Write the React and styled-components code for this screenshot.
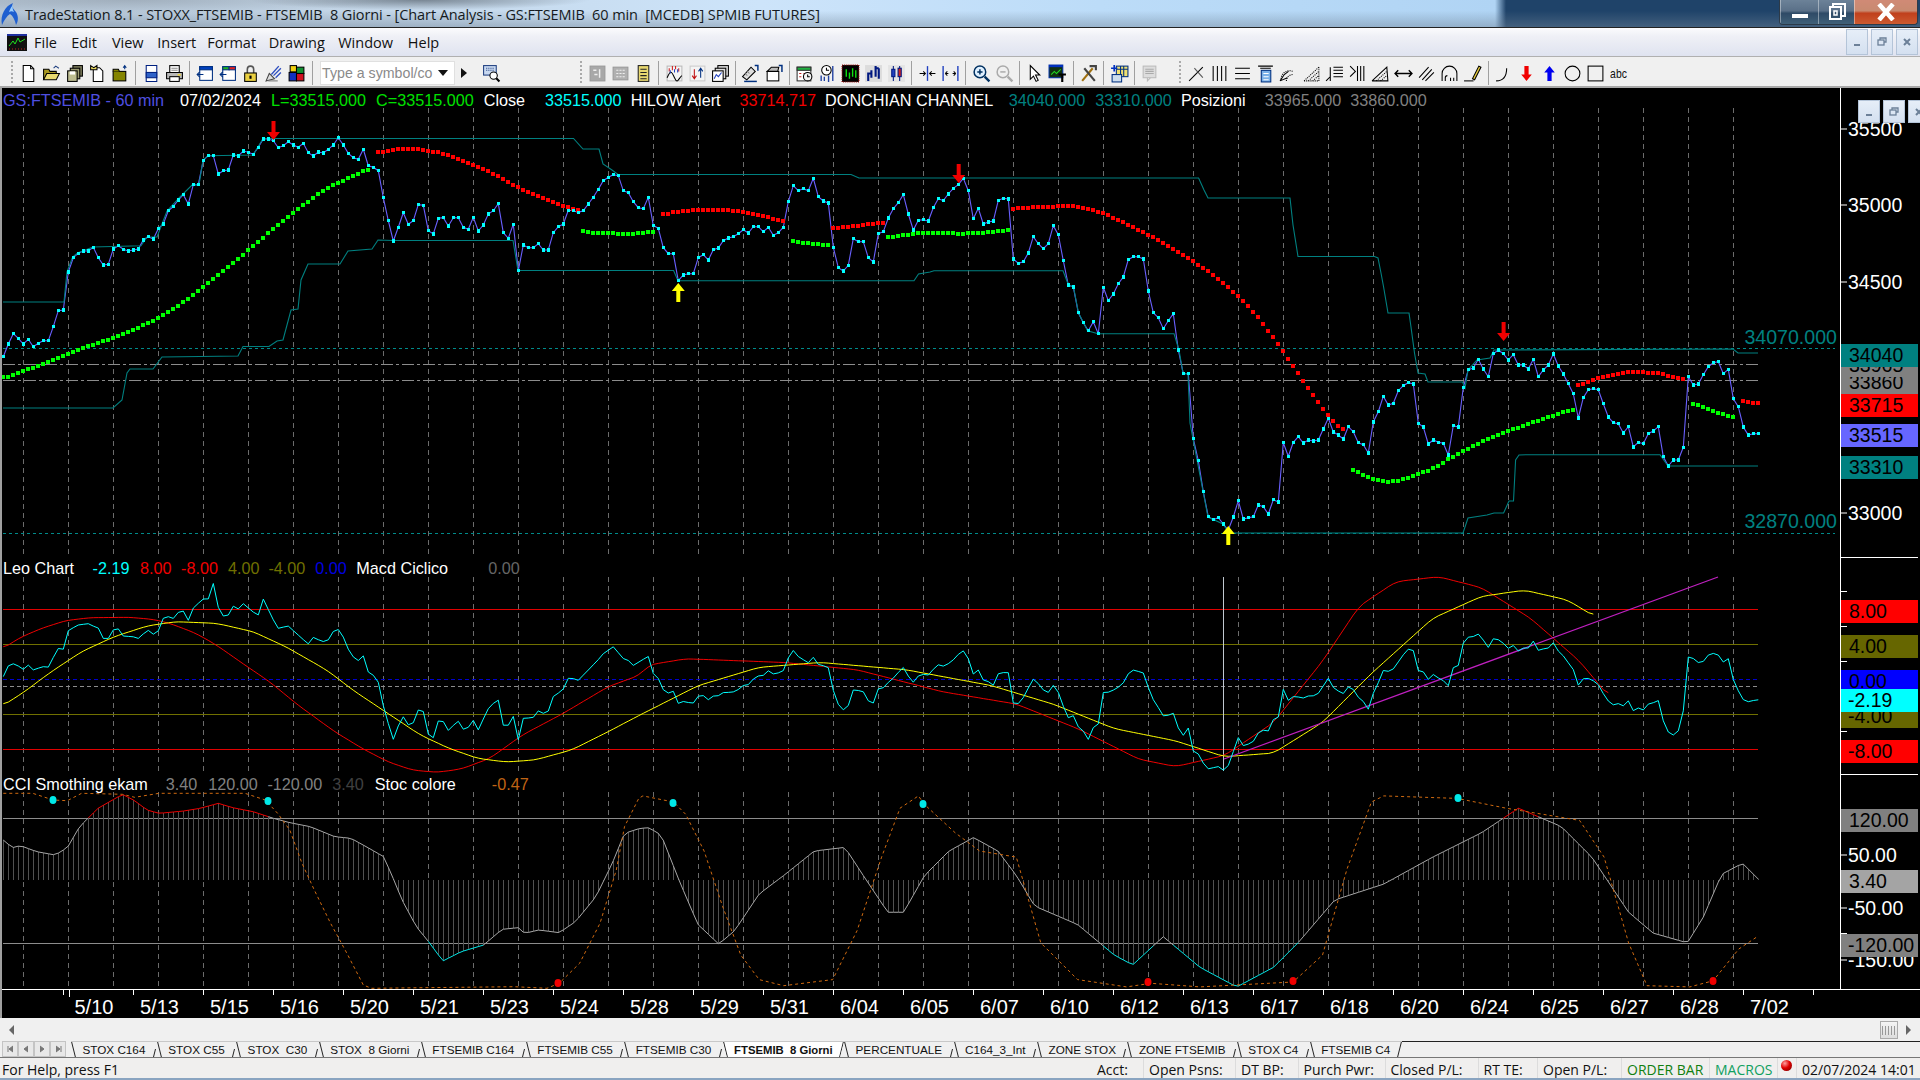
import React from "react";
import styled, { createGlobalStyle } from "styled-components";

const GlobalStyle = createGlobalStyle`
  html, body { margin: 0; padding: 0; background: #000; overflow: hidden; }
  * { box-sizing: border-box; }
`;

const UI_FONT = `"Open Sans", "Noto Sans", sans-serif`;
const CHART_FONT = `"Liberation Sans", Arial, sans-serif`;

/* ---------- data helpers: everything is in page pixels ---------- */
const barX = (i) => 3.3 + 5 * i;
const z9 = (p) => [p[0] / 2.45, p[1] / 3 + 90];
const z10 = (p) => [p[0] / 2.45, p[1] / 3 + 550];
const z11 = (p) => [620 + p[0] / 2.613, p[1] / 3 + 90];
const z12 = (p) => [1200 + p[0] / 2.75, p[1] / 3 + 240];
const dsp = (p) => [p[0] * 1.2245, p[1] * 1.2245];

const lerp = (pts, x) => {
  if (x <= pts[0][0]) return pts[0][1];
  for (let k = 1; k < pts.length; k++) {
    if (x <= pts[k][0]) {
      const [x0, y0] = pts[k - 1];
      const [x1, y1] = pts[k];
      return y0 + ((y1 - y0) * (x - x0)) / (x1 - x0);
    }
  }
  return pts[pts.length - 1][1];
};

const onBars = (pts, win = 0) => {
  const a = Math.ceil((pts[0][0] - 3.3) / 5);
  const b = Math.floor((pts[pts.length - 1][0] - 3.3) / 5);
  const raw = [];
  for (let i = a; i <= b; i++) raw.push([barX(i), lerp(pts, barX(i))]);
  if (!win) return raw;
  return raw.map(([x], n) => {
    const s = raw.slice(Math.max(0, n - win), n + win + 1);
    return [x, s.reduce((t, q) => t + q[1], 0) / s.length];
  });
};

const toLine = (pts) => pts.map((p) => `${p[0].toFixed(1)},${p[1].toFixed(1)}`).join(" ");

const priceA = [800,762,731,745,762,748,770,760,752,752,710,662,660,546,503,490,483,483,472,503,525,523,477,467,478,483,480,477,450,440,447,416,402,362,350,330,314,342,284,284,211,197,197,252,242,240,195,198,183,187,193,172,147,147,152,173,167,155,165,172,160,188,198,186,189,178,165,143,165,190,203,208,178,227,232,242,323,392,453,412,368,403,392,344,346,422,432,385,383,408,383,383,412,418,382,423,405,372,362,341,428,445,403,542,465,473,473,461,480,480,428,410,402,361,362,367,362,342,322,298,272,262,254,257];
const priceB = [302,308,335,353,356,322,406,415,473,491,491,572,555,551,551,503,494,510,479,474,452,444,440,431,419,429,410,410,425,412,436,428,412,335,287,302,296,302,265,320,333,339,472,533,543,526,446,455,455,503,516,431,425,384,356,338,314,372,420,391,389,393,353,326,332,312,295,284,265,302,386,355,402,396,393,331,325,327,507,520,515,489,440,461,476,461,407,434,512,585,591,668,698,722,695,731,592,632,612,581,561,509,500,500,507,603,668,683,716,692,671,780,851,851,1046,1112];
const priceC = [755,830,839,833,852,870,831,782,837,833,830,795,800,822,779,786,608,649,607,590,609,600,603,600,567,535,576,585,597,560,575,608,614,639,546,515,469,495,490,452,437,428,432,550,561,612,600,607,610,645,557,561,442,389,384,358,387,410,341,330,341,360,344,375,375,387,358,410,390,375,342,378,402,431,461,534,473,449,446,449,491,531,548,551,579,560,621,607,611,581,573,560,650,678,660,660,622,410,435,432,404,380,368,365,401,388,476,500,561,585,581,581];
const price = [...priceA.map((y) => y / 3 + 90), ...priceB.map((y) => y / 3 + 90), ...priceC.map((y) => y / 3 + 240)].map((y, i) => [barX(i), y]);

const upperChannel = [[3,302],[64,302],[67,272],[72.6,257],[77.5,253],[93,247],[141,245.7],[147,237],[157,237],[167,211],[180,197],[192,185],[199,185],[203,160],[208,155.7],[253,155],[258,147],[263,138.5],[573.5,138.5],[583,149],[599,149],[603,164],[612,170],[618,174.5],[851,174.5],[859,178],[1198.6,178],[1204,190],[1208,198],[1290,198],[1293,225],[1298,256.5],[1374.5,256.5],[1378,258],[1381,273],[1383.6,287],[1388,313],[1409,313],[1411,327],[1414.5,353],[1418,373],[1425,374],[1428,382],[1462.5,382],[1465,388],[1468,370],[1477,360],[1490,358],[1494,350],[1733,349],[1738,353],[1758,353]];
const lowerChannel = [[3,408],[113,408],[122,400],[127,373],[130,369],[153,369],[162,357],[238,356],[243,346.5],[269,346.5],[277,341],[283,340],[291,310],[298,309],[301,280],[308,264],[340,264],[348,251],[372,249],[378,240],[393,240.5],[513,240.5],[518,270.5],[673.6,270.5],[678,280.7],[914,280.7],[918.5,274],[930,272],[934,270.7],[1063,270.7],[1068.5,285],[1073.5,287],[1078.5,313],[1087.6,330.7],[1098,333.7],[1174,333.7],[1179,350],[1183,373],[1188,374],[1190,423],[1193,439],[1203,491],[1208,517],[1223,524],[1229,533],[1463,533],[1468,518],[1487,515],[1494,513],[1503.6,513],[1509,501],[1513.5,501],[1515.6,460],[1519,455],[1526,454.7],[1660,454.7],[1668,466],[1758,466]];

const hilowSegs = [
  { c: "#00ff00", p: [[8,865],[100,825],[200,775],[300,735],[380,690],[430,655],[500,590],[600,490],[700,385],[800,295],[880,250],[905,235]].map(z9) },
  { c: "#ff0000", p: [[925,188],[975,177],[1020,177],[1080,188],[1150,220],[1200,245],[1270,292],[1340,330],[1417,363]].map(z9) },
  { c: "#00ff00", p: [[[1427,422],[1460,430],[1568,431]].map(z9), [[8,431],[50,428],[100,424]].map(z11)].flat() },
  { c: "#ff0000", p: [[113,375],[150,364],[210,359],[280,359],[330,367],[380,380],[430,395]].map(z11) },
  { c: "#00ff00", p: [[440,450],[490,460],[545,465]].map(z11) },
  { c: "#ff0000", p: [[557,415],[620,407],[692,396]].map(z11) },
  { c: "#00ff00", p: [[700,444],[750,434],[790,429],[900,431],[960,428],[1017,420]].map(z11) },
  { c: "#ff0000", p: [[[1027,356],[1100,351],[1185,348],[1225,356],[1265,370],[1330,405],[1380,433],[1430,465],[1500,515],[1568,568]].map(z11), [[50,117],[105,167],[160,230],[200,290],[229,333],[270,400],[310,465],[353,525],[395,578]].map(z12)].flat() },
  { c: "#00ff00", p: [[408,675],[450,708],[490,722],[530,726],[570,715],[640,687],[700,647],[800,593],[900,553],[1027,507]].map(z12) },
  { c: "#ff0000", p: [[1040,437],[1095,415],[1150,400],[1205,395],[1270,401],[1330,420]].map(z12) },
  { c: "#00ff00", p: [[1343,480],[1400,510],[1480,537]].map(z12) },
  { c: "#ff0000", p: [[1494,483],[1536,491]].map(z12) },
];

const leoHead = [[8,380],[20,348],[35,340],[57,358],[69,345],[81,360],[105,350],[118,352],[142,295],[154,303],[166,243],[191,225],[216,221],[228,228],[240,232],[252,265],[264,268],[277,240],[289,235],[301,258],[326,260],[338,266],[362,240],[375,253],[387,245],[400,205],[412,200],[424,206],[437,187],[449,183],[461,212],[473,175],[497,147],[510,148],[522,97],[534,170],[546,198],[558,198],[571,168],[583,178],[595,160],[632,198],[645,147],[669,208],[681,235],[706,228],[755,282],[767,262],[791,275],[804,270],[816,245],[828,237],[840,258],[852,295],[865,320],[877,333],[889,313],[901,365],[914,375],[926,392],[938,462],[950,515],[963,570],[975,530],[987,498],[999,525],[1012,520],[1024,480],[1036,478],[1048,550],[1060,570],[1073,513],[1085,512],[1097,543],[1122,512],[1134,538],[1146,535],[1158,507],[1171,542],[1195,478],[1220,445],[1232,525],[1244,530],[1256,490],[1270,570],[1281,505],[1306,503],[1318,482],[1330,490],[1342,488],[1355,440],[1379,420],[1391,385],[1403,385],[1416,392],[1465,330],[1477,312],[1503,290],[1526,325],[1538,330],[1563,360]].map(z10);
// right part of the oscillator: its slow path plus a little of the price wiggle
const leoSlow = [[525,538],[545,565],[565,572],[600,565],[625,550],[650,537],[670,545],[690,572],[715,565],[735,553],[760,548],[785,537],[805,552],[830,565],[850,558],[870,580],[890,598],[905,565],[925,552],[940,562],[955,590],[975,610],[998,628],[1010,610],[1030,600],[1045,575],[1060,572],[1085,560],[1105,566],[1120,570],[1135,545],[1150,537],[1165,548],[1180,555],[1195,530],[1210,520],[1225,527],[1240,530],[1255,526],[1270,532],[1285,545],[1300,560],[1320,575],[1340,576],[1355,580],[1365,595],[1372,585],[1380,545],[1398,536],[1412,545],[1420,565],[1436,571]].map(dsp);
const priceWiggle = (n) => {
  const s = price.slice(Math.max(0, n - 3), n + 4);
  return price[n][1] - s.reduce((t, q) => t + q[1], 0) / s.length;
};
const leo = [
  ...onBars(leoHead),
  ...price.slice(128).map(([x], k) => [x, lerp(leoSlow, x) + 0.5 * priceWiggle(k + 128)]),
];

const leoRed = onBars([...[[8,295],[50,262],[100,236],[160,212],[220,203],[320,202],[380,209],[420,222],[480,250],[530,285],[600,345],[660,395],[730,465],[820,545],[890,597],[950,635],[1010,660],[1070,667],[1130,657],[1200,625],[1280,555],[1380,490],[1490,410],[1568,375]].map(z10), ...[[530,543],[560,538],[640,541],[700,547],[770,565],[830,575],[880,595],[930,620],[960,626],[1000,617],[1040,590],[1080,540],[1110,495],[1140,475],[1175,471],[1210,480],[1250,505],[1290,540],[1315,570]].map(dsp)], 1);
const leoYellow = onBars([...[[8,466],[60,425],[120,370],[200,305],[280,260],[360,228],[430,215],[530,220],[620,245],[700,290],[800,360],[870,425],[950,490],[1030,555],[1100,595],[1170,625],[1240,636],[1310,630],[1400,600],[1490,545],[1568,495]].map(z10), ...[[570,560],[620,545],[670,541],[740,547],[810,560],[860,575],[910,595],[960,605],[1000,618],[1040,615],[1080,590],[1120,550],[1170,505],[1210,487],[1245,482],[1280,490],[1305,505]].map(dsp)], 1);

const cci = onBars([...[[8,870],[30,893],[50,887],[90,905],[135,915],[165,893],[195,830],[240,775],[300,733],[330,752],[360,780],[390,790],[450,783],[490,775],[535,760],[570,773],[620,785],[670,805],[710,818],[760,830],[820,860],[860,865],[900,892],[940,920],[965,990],[985,1050],[1020,1130],[1050,1175],[1085,1233],[1130,1205],[1185,1185],[1230,1138],[1270,1133],[1285,1150],[1320,1140],[1370,1148],[1410,1115],[1460,1040],[1500,940],[1530,850],[1568,835]].map(z10), ...[[530,676],[540,682],[555,720],[570,755],[587,771],[600,760],[620,730],[640,715],[665,695],[690,692],[705,715],[725,745],[738,745],[755,715],[775,695],[795,684],[815,695],[830,715],[845,740],[880,755],[910,780],[925,788],[950,765],[980,790],[1010,806],[1040,790],[1060,770],[1090,735],[1130,722],[1170,700],[1210,680],[1240,660],[1275,675],[1300,700],[1330,745],[1350,762],[1378,770],[1391,749],[1406,714],[1423,705],[1436,718]].map(dsp)]);

const stoch = [...[[8,730],[80,730],[130,750],[165,752],[200,730],[300,733],[330,742],[390,730],[600,730],[650,750],[680,790],[710,840],[740,940],[770,1020],[810,1120],[850,1210],[890,1305],[910,1315],[1260,1310],[1340,1315],[1370,1300],[1420,1240],[1470,1120],[1510,960],[1530,830],[1565,745]].map(z10), ...[[525,650],[550,655],[560,665],[575,695],[590,740],[605,780],[620,800],[640,805],[680,800],[700,760],[720,700],[735,660],[750,650],[755,657],[780,680],[800,695],[830,700],[850,770],[880,800],[920,806],[940,803],[980,806],[1056,802],[1080,780],[1100,710],[1120,655],[1130,650],[1190,652],[1230,660],[1290,670],[1310,700],[1330,770],[1345,805],[1380,806],[1399,801],[1420,775],[1435,765]].map(dsp)];

const gridX = Array.from({ length: 39 }, (_, k) => 23 + 45 * k);

/* ---------- chart window ---------- */
const Page = styled.div`
  width: 1920px;
  height: 1080px;
  display: flex;
  flex-direction: column;
  background: #f0f0f0;
  overflow: hidden;
`;

const TitleBar = styled.div`
  height: 28px;
  flex: none;
  display: flex;
  align-items: center;
  border-bottom: 1px solid #222;
  background:
    radial-gradient(ellipse 170px 10px at 420px 0, rgba(70, 80, 90, 0.6), transparent),
    radial-gradient(ellipse 260px 14px at 130px 0, rgba(120, 130, 140, 0.4), transparent),
    linear-gradient(180deg, transparent 40%, rgba(110, 130, 150, 0.45) 100%),
    linear-gradient(90deg, #b8c8d8 0, #c5d8ea 420px, #cde4fa 760px, #bcdcf8 1100px, #b0d4f4 1495px, #1f4369 1506px, #1f4369 100%);
`;

const TitleText = styled.div`
  font: 14.5px ${UI_FONT};
  color: #151a20;
  white-space: pre;
  margin-left: 5px;
  padding-top: 1px;
  letter-spacing: -0.09px;
`;

const WinButtons = styled.div`
  margin-left: auto;
  margin-right: 2px;
  display: flex;
  align-self: flex-start;
  height: 25px;
  border: 1px solid #2c3a48;
  border-top: 0;
  border-radius: 0 0 4px 4px;
  overflow: hidden;
`;

const WinButton = styled.div`
  width: ${(p) => p.$w}px;
  display: flex;
  align-items: center;
  justify-content: center;
  border-left: 1px solid rgba(255, 255, 255, 0.4);
  background: ${(p) =>
    p.$close
      ? "linear-gradient(180deg, #d08a76 0, #c88a70 45%, #c0401c 55%, #cc5a30 100%)"
      : "linear-gradient(180deg, #6c8298 0, #5a7088 45%, #2e4a66 55%, #406078 100%)"};
`;

const MenuBar = styled.div`
  height: 29px;
  flex: none;
  display: flex;
  align-items: center;
  background: linear-gradient(180deg, #fbfbfd 0, #eff0f6 30%, #dfe3f0 100%);
  border-bottom: 1px solid #b0b0b0;
  padding-left: 7px;
`;

const MenuLogo = styled.svg`
  width: 20px;
  height: 17px;
  margin-right: 7px;
`;

const MenuItem = styled.span`
  font: 14.5px/22px ${UI_FONT};
  padding-top: 1px;
  color: #111;
  margin-right: ${(p) => p.$gap}px;
`;

const MdiButtons = styled.div`
  display: flex;
  gap: 3px;
  height: ${(p) => p.$h}px;
  margin-left: auto;
  margin-right: 2px;
`;

const MdiOverlay = styled(MdiButtons)`
  position: absolute;
  top: 12px;
  right: -10px;
  margin: 0;
  z-index: 3;
`;

const MdiButton = styled.div`
  width: 22px;
  display: flex;
  align-items: center;
  justify-content: center;
  border: 1px solid #b4c4d8;
  background: linear-gradient(180deg, #e6eef8, #d4e0f0);
`;

const Toolbar = styled.div`
  height: 31px;
  flex: none;
  display: flex;
  align-items: center;
  padding: 3px 0 0 9px;
  background: #f0f0f0;
  border-bottom: 2px solid #a8a8a8;
`;

const Grip = styled.div`
  width: 8px;
  height: 24px;
  margin-left: ${(p) => p.$ml || 0}px;
  background: repeating-linear-gradient(180deg, #aaa 0 2px, transparent 2px 4px) 2px 0 / 2px 100% no-repeat;
`;

const ToolBtn = styled.div`
  width: 23px;
  height: 24px;
  flex: none;
  display: flex;
  align-items: center;
  justify-content: center;
  margin-left: ${(p) => p.$ml || 0}px;
`;

const ToolSep = styled.div`
  width: 7.7px;
  height: 24px;
  flex: none;
  background: linear-gradient(#a0a0a0, #a0a0a0) center / 1px 100% no-repeat;
`;

const AbcLabel = styled.span`
  font: 13px "Liberation Sans Narrow", ${CHART_FONT};
  color: #111;
  transform: scaleX(0.8);
`;

const SymbolBox = styled.div`
  width: 135px;
  height: 24px;
  margin-left: 4px;
  flex: none;
  display: flex;
  align-items: center;
  justify-content: space-between;
  padding: 0 6px 0 1px;
  background: #fff;
  border: 1px solid #e0e0e0;
  font: 14.2px ${CHART_FONT};
  color: #8a8a8a;
`;

const DropArrow = styled.span`
  width: 0;
  height: 0;
  border-left: 5px solid transparent;
  border-right: 5px solid transparent;
  border-top: 6px solid #111;
`;

const PlayArrow = styled.span`
  width: 18px;
  flex: none;
  display: flex;
  justify-content: center;
  &::before {
    content: "";
    border-top: 5px solid transparent;
    border-bottom: 5px solid transparent;
    border-left: 6px solid #111;
  }
`;

const ChartWindow = styled.div`
  position: relative;
  height: 930px;
  flex: none;
  display: flex;
  flex-direction: column;
  background: #000;
  border-left: 2px solid #a0a0a0;
`;

const ChartBody = styled.div`
  display: flex;
  height: 902px;
  flex: none;
  border-bottom: 1px solid #fff;
`;

const Plot = styled.div`
  width: 1838px;
  flex: none;
  display: flex;
  flex-direction: column;
`;

const Pane = styled.div`
  position: relative;
  height: ${(p) => p.$h}px;
  flex: none;
  svg { display: block; }
`;

const Legend = styled.div`
  position: absolute;
  left: 1px;
  top: 0;
  display: flex;
  font: 16.2px/${(p) => p.$lh}px ${CHART_FONT};
  white-space: pre;
`;

const LegendItem = styled.span`
  color: ${(p) => p.$c};
  margin-left: ${(p) => p.$ml || 0}px;
`;

const LevelLabel = styled.span`
  position: absolute;
  right: 3px;
  top: ${(p) => p.$y}px;
  transform: translateY(-50%);
  font: 19.6px ${CHART_FONT};
  color: #008080;
`;

const PriceAxis = styled.div`
  position: relative;
  flex: 1;
  border-left: 1px solid #fff;
`;

const AxisTick = styled.div`
  position: absolute;
  left: 0;
  top: ${(p) => p.$y - 88}px;
  transform: translateY(-50%);
  padding-left: 7px;
  font: 19.5px/23px ${CHART_FONT};
  color: #fff;
  white-space: nowrap;
  &::before {
    content: "";
    position: absolute;
    left: 0;
    top: 11px;
    width: 6px;
    height: 1px;
    background: #fff;
  }
`;

const AxisMark = styled.div`
  position: absolute;
  left: 0;
  top: ${(p) => p.$y - 88}px;
  width: 6px;
  height: 1px;
  background: #fff;
`;

const Badge = styled.div`
  position: absolute;
  left: 0;
  width: 77px;
  top: ${(p) => p.$y - 88}px;
  height: 23px;
  padding-left: ${(p) => (p.$wide ? 7 : 8)}px;
  background: ${(p) => p.$bg};
  color: ${(p) => p.$fg || "#000"};
  font: 19.5px/23px ${CHART_FONT};
  overflow: hidden;
`;

const PaneRule = styled.div`
  position: absolute;
  left: -1px;
  right: 2px;
  top: ${(p) => p.$y - 88}px;
  height: 1px;
  background: #fff;
`;

const DateStrip = styled.div`
  position: relative;
  height: 27px;
  flex: none;
  display: flex;
  padding-left: 72.5px;
  background: #000;
  &::before {
    content: "";
    position: absolute;
    left: 61px;
    top: 0;
    width: 1752px;
    height: 5px;
    background: linear-gradient(90deg, #fff 1px, transparent 1px) 0 0 / 70px 5px repeat-x;
  }
`;

const DateLabel = styled.span`
  position: relative;
  flex: none;
  width: 70px;
  font: 20px/34px ${CHART_FONT};
  color: #fff;
  &:first-child {
    width: 65.5px;
  }
  &:first-child::before {
    content: "";
    position: absolute;
    left: -6px;
    top: 0;
    width: 1px;
    height: 7px;
    background: #fff;
  }
`;

const ScrollBar = styled.div`
  height: 23px;
  flex: none;
  display: flex;
  align-items: center;
  background: #f0f0f0;
  padding: 0 9px 0 9px;
`;

const ScrollArrow = styled.span`
  width: 0;
  height: 0;
  border-top: 5px solid transparent;
  border-bottom: 5px solid transparent;
  ${(p) => (p.$left ? "border-right: 5px solid #666;" : "border-left: 5px solid #666;")}
`;

const ScrollThumb = styled.div`
  margin-left: auto;
  margin-right: 8px;
  width: 18px;
  height: 18px;
  border: 1px solid #aaa;
  background: linear-gradient(90deg, #999 1px, transparent 1px) 4px 4px / 3px 9px repeat-x,
    linear-gradient(180deg, #f4f4f4, #ddd);
`;

/* ---------- tabs and status ---------- */
const TabRow = styled.div`
  height: 17px;
  flex: none;
  display: flex;
  padding-left: 2px;
  background: #f0f0f0;
  border-bottom: 1px solid #777;
`;

const NavButton = styled.div`
  width: 16px;
  display: flex;
  align-items: center;
  justify-content: center;
  border: 1px solid #c4c4c4;
  background: #e8e8e8;
`;

const TabStrip = styled.div`
  display: flex;
  margin-left: 5px;
  border-top: 1px solid #c8c8c8;
`;

const Tab = styled.div`
  position: relative;
  padding: 0 11.45px;
  font: ${(p) => (p.$active ? "bold 11.3px" : "11.72px")}/16px ${CHART_FONT};
  color: #111;
  white-space: pre;
  ${(p) => p.$active && `
    background: #fff;
    clip-path: polygon(0 0, 100% 0, calc(100% - 4px) 100%, 4px 100%);
  `}
  &::before, &::after {
    content: "";
    position: absolute;
    bottom: 0;
    width: 1px;
    background: #222;
  }
  &::before {
    left: 2px;
    height: 100%;
    transform: skewX(14deg);
  }
  &::after {
    right: 2px;
    height: ${(p) => (p.$full ? "100%" : "55%")};
    transform: skewX(-14deg);
  }
`;

const TabFiller = styled.div`
  flex: 1;
  border-top: 1px solid #222;
`;

const StatusBar = styled.div`
  height: 20px;
  flex: none;
  display: flex;
  background: #f0efee;
`;

const StatusCell = styled.div`
  width: ${(p) => p.$w}px;
  flex: none;
  padding: 3px 0 0 ${(p) => p.$pl ?? 5}px;
  font: 14px/17px ${UI_FONT};
  color: ${(p) => p.$c || "#111"};
  white-space: nowrap;
  border-left: ${(p) => (p.$plain ? "0" : "1px solid #dcdcdc")};
  display: flex;
  align-items: center;
`;

const Ball = styled.span`
  width: 11px;
  height: 11px;
  border-radius: 50%;
  margin: -9px 0 0 3px;
  background: radial-gradient(circle at 35% 30%, #ffa0a0, #e00000 45%, #700000);
`;

const BottomEdge = styled.div`
  flex: 1;
  background: #8aa4c0;
`;

/* ---------- toolbar drawings ---------- */
const Ico = ({ children }) => (
  <svg width="19" height="19" viewBox="0 0 18 18" fill="none" stroke="#000" strokeWidth="1">
    {children}
  </svg>
);

const drawings = {
  doc: <><path d="M4 1.5h7l3 3v12H4z" fill="#fff" /><path d="M11 1.5v3h3" /></>,
  open: <><path d="M1.5 15V5h5l1 2h6v2" fill="#a89820" /><path d="M1.5 15l3-6h12l-3 6z" fill="#eadb70" /><path d="M11 4l2-2 3 2" stroke="#204080" /></>,
  saves: <><rect x="7.5" y="1.5" width="9" height="10" fill="#7c7c5c" /><rect x="5" y="4" width="9" height="10" fill="#9a9a70" /><rect x="2.5" y="6.5" width="9" height="10" fill="#bcbc90" /><rect x="4.5" y="7" width="5" height="3" fill="#fff" stroke="none" /></>,
  note: <><path d="M5 3.5h6l3 3v10H5z" fill="#fff" /><path d="M2.5 1.5l3 2 3-2v4h-6z" fill="#e8d860" /></>,
  olive: <><rect x="2" y="7" width="12" height="9" fill="#848400" /><path d="M2 7V5h5l1 2" fill="#848400" /><path d="M13 5V2M11.5 3.5L13 1.5l1.5 2" stroke="#003080" /></>,
  preview: <><path d="M4 1.5h10v15H4z" fill="#fff" stroke="#002080" /><rect x="4" y="8" width="10" height="5" fill="#2f62c8" stroke="#002080" /></>,
  printer: <><rect x="4.5" y="1.5" width="9" height="7" fill="#fff" /><path d="M6 4h6M6 6h6" stroke="#888" /><path d="M1.5 8h15v6h-15z" fill="#b8b8b8" /><rect x="4.5" y="12" width="9" height="4.5" fill="#fff" /><rect x="12" y="9.5" width="3" height="1.5" fill="#ead040" stroke="none" /></>,
  winBlue: <><rect x="4.5" y="2.5" width="12" height="13" fill="#fff" stroke="#003080" /><rect x="4.5" y="2.5" width="12" height="3" fill="#0040c0" stroke="#003080" /><path d="M8 10H2M4.5 7.5L2 10l2.5 2.5" stroke="#003080" /></>,
  winColor: <><rect x="4.5" y="2.5" width="12" height="13" fill="#fff" stroke="#003080" /><rect x="4.5" y="2.5" width="6" height="3" fill="#20b020" stroke="#003080" /><rect x="10.5" y="2.5" width="6" height="3" fill="#e02020" stroke="#003080" /><path d="M8 10H2M4.5 7.5L2 10l2.5 2.5" stroke="#003080" /></>,
  lock: <><path d="M6 9V5a3 3 0 0 1 6 0v4" stroke="#555" strokeWidth="1.5" /><rect x="3.5" y="8.5" width="11" height="8" fill="#ead040" /><rect x="8" y="11" width="2" height="3" fill="#000" stroke="none" /></>,
  dish: <><path d="M2 16l3-7 5 5z" fill="#ddd" stroke="#444" /><path d="M7 10l7-8M9 11l7-7M11 13l5-5" stroke="#3050c0" strokeWidth="1.3" /><path d="M4 16h9" stroke="#777" /></>,
  cubes: <><rect x="3" y="1.5" width="6" height="6" fill="#f0d010" /><rect x="9" y="3" width="7" height="6" fill="#109030" /><rect x="2" y="8" width="7" height="8" fill="#1030c0" /><rect x="9" y="9" width="7" height="7" fill="#d01020" /></>,
  lookup: <><rect x="1.5" y="1.5" width="12" height="9" fill="#c8d8f0" stroke="#204080" /><path d="M4 4h7M4 6h7" stroke="#204080" strokeDasharray="1 1" /><circle cx="11" cy="11" r="3.5" fill="#fff" /><path d="M13.5 13.5l3 3" strokeWidth="2" /></>,
  gray1: <><rect x="2" y="2" width="14" height="14" fill="#a8a8a8" stroke="#999" /><path d="M5 6h3M11 5v8M6 10h3" stroke="#eee" strokeWidth="1.4" /></>,
  gray2: <><rect x="2" y="3" width="14" height="12" fill="#b0b0b0" stroke="#999" /><path d="M5 6h8M5 9h8M5 12h8" stroke="#eee" strokeDasharray="2 1" /></>,
  gray3: <><rect x="4" y="1.5" width="10" height="15" fill="#e8d870" stroke="#222" /><path d="M6 5h6M6 8h6M6 11h6M6 14h6" stroke="#222" /></>,
  wave: <><rect x="2" y="2" width="14" height="14" fill="#f4f4f4" stroke="#bbb" /><path d="M2 13c3-7 4-7 7 0s4 0 7-2" stroke="#000" /><path d="M4 7v-3M7 6v-4M10 5v-3M13 7v-3" stroke="#d02020" /><path d="M5 9V6M9 8V5M12 8V5" stroke="#2040c0" /></>,
  updown: <><rect x="2" y="2" width="14" height="14" fill="#f4f4f4" stroke="#ccc" /><path d="M6 5v8M4 11l2 3 2-3" stroke="#c01010" /><path d="M12 13V5M10 7l2-3 2 3" stroke="#003080" /></>,
  stack: <><rect x="6.5" y="1.5" width="10" height="10" fill="#ddd" /><rect x="4" y="4" width="10" height="10" fill="#ddd" /><rect x="1.5" y="6.5" width="10" height="10" fill="#fff" /><path d="M3 14l2-4 2 2 3-4" stroke="#2040c0" /></>,
  chartA: <><path d="M1.5 12l8-9 4 4-8 8z" fill="#ddd" /><path d="M4 9l2 2M6 7l2 2" stroke="#888" /><path d="M13 1.5h3v5" stroke="#003080" strokeWidth="1.4" /><path d="M3 16.5h12" stroke="#003080" strokeWidth="1.4" /></>,
  chartB: <><rect x="3" y="7" width="11" height="9" fill="#fff" /><path d="M3 7l4-4h7l-1 4z" fill="#bbb" /><path d="M14 1.5h3v6" stroke="#003080" strokeWidth="1.4" /></>,
  calendar: <><rect x="2" y="3" width="13" height="13" fill="#fff" stroke="#333" /><rect x="2" y="3" width="13" height="3" fill="#20b040" stroke="#333" /><path d="M4 9h2M8 9h2M4 12h2" stroke="#c02020" /><circle cx="12" cy="12" r="4" fill="#f4f4f4" /><path d="M12 10v2h2" /></>,
  clockBars: <><circle cx="8" cy="6" r="4.5" fill="#fff" /><path d="M8 3.5V6h2.5" /><path d="M3 11v5M6 12v4M10 11v6" stroke="#2040a0" strokeWidth="1.3" /><path d="M14 2v14" stroke="#2040a0" strokeWidth="1.3" /></>,
  black: <><rect x="1" y="1" width="16" height="16" fill="#000" stroke="#900" strokeDasharray="1 1" /><path d="M5 5v7M8 8v6M11 4v8M14 6v7" stroke="#10e010" strokeWidth="1.3" /></>,
  blueBars: <><rect x="1" y="1" width="16" height="16" fill="#dcdcdc" stroke="none" /><path d="M4 8v8M7 6v7M11 2v10M14 4v10M4 9h3M11 4h3" stroke="#001880" strokeWidth="2" /></>,
  candles: <><rect x="1" y="1" width="16" height="16" fill="#e4e4e4" stroke="none" /><path d="M6 2v14M12 2v14" stroke="#001880" /><rect x="4.5" y="5" width="3" height="7" fill="#2040c0" stroke="#001880" /><rect x="10.5" y="4" width="3" height="8" fill="#d02020" stroke="#001880" /></>,
  inward: <><path d="M9 2v14" stroke="#2040c0" strokeWidth="1.3" /><path d="M1.5 9H7M5 7l2 2-2 2M16.5 9H11M13 7l-2 2 2 2" /></>,
  outward: <><path d="M2 2v14M16 2v14" stroke="#2040c0" strokeWidth="1.3" /><path d="M4 9h3M4 9l2-2M4 9l2 2M14 9h-3M14 9l-2-2M14 9l-2 2" /></>,
  zoomIn: <><circle cx="7.5" cy="7.5" r="5.5" fill="#dff0ff" stroke="#003060" strokeWidth="1.4" /><path d="M5 7.5h5M7.5 5v5" stroke="#003060" strokeWidth="1.4" /><path d="M12 12l4.5 4.5" stroke="#003060" strokeWidth="2.2" /></>,
  zoomOut: <><circle cx="7.5" cy="7.5" r="5.5" fill="#f0f0f0" stroke="#aaa" strokeWidth="1.4" /><path d="M5 7.5h5" stroke="#aaa" strokeWidth="1.4" /><path d="M12 12l4.5 4.5" stroke="#aaa" strokeWidth="2.2" /></>,
  cursor: <path d="M5 1.5v13l3-3 2.5 5 2-1-2.5-5h4z" fill="#fff" />,
  chartT: <><rect x="1" y="1" width="13" height="12" fill="#103010" stroke="#0030a0" /><rect x="1" y="1" width="13" height="2" fill="#0030c0" stroke="none" /><path d="M3 10l3-3 2 2 4-4" stroke="#20e020" /><path d="M10 10h7M13.5 10v7" strokeWidth="2" /></>,
  tools: <><path d="M3 16L13 4" stroke="#a07010" strokeWidth="2" /><path d="M15 16L5 4" stroke="#444" strokeWidth="2" /><path d="M10 2h6v4" stroke="#444" strokeWidth="2" /></>,
  addTable: <><rect x="6" y="2" width="11" height="10" fill="#f0e070" stroke="#003080" /><path d="M6 5h11M10 2v10M13 2v10" stroke="#003080" /><path d="M4 1v6M1 4h6" stroke="#0030c0" strokeWidth="1.6" /><rect x="2" y="10" width="9" height="7" fill="#cde" stroke="#003080" /></>,
  grayNote: <><rect x="3" y="2" width="12" height="11" fill="#ddd" stroke="#bbb" /><path d="M5 5h8M5 7h8M5 9h8" stroke="#aaa" /><path d="M7 13v3l3-3" stroke="#bbb" /></>,
  trend: <><path d="M2 16L15 3" /><path d="M7 4l8 9" stroke="#555" /></>,
  vlines: <path d="M3 2v14M7 2v14M11 2v14M15 2v14" />,
  hlines: <path d="M2 4h14M2 9h14M2 14h14" />,
  calc: <><path d="M2 2h14M4 4h10" /><rect x="5" y="6" width="9" height="11" fill="#7ab0e8" stroke="#003080" /><path d="M7 9h5M7 12h5M7 15h5" stroke="#fff" /></>,
  fan: <><path d="M1 16l4-6 4-3M1 16l7-3" /><path d="M2 14a8 8 0 0 1 11-7M7 16a6 6 0 0 1 6-6" strokeDasharray="1 1" /></>,
  fibo: <path d="M2 16h14L16 3M2 16L16 3M6 16L16 7M10 16l6-5" strokeDasharray="1 1" />,
  stairs: <><path d="M1 16l4-4v4M5 12V3" /><path d="M8 3h9M8 6h9M8 9h9M8 12h9" /></>,
  speed: <><path d="M2 2l5 5-5 5" /><path d="M9 2v14M12 2v14M15 2v14" /></>,
  angle: <><path d="M1 16h15L15 3 1 16" /><path d="M5 16L15 7M9 16l6-5" strokeDasharray="1 1" /></>,
  arrows: <path d="M1 9h16M4 6L1 9l3 3M14 6l3 3-3 3" strokeWidth="1.3" />,
  channel: <path d="M2 13L11 3M5 15L14 5M8 16L16 8" />,
  arcs: <><path d="M2 16V9a7 7 0 0 1 14 0v7" /><path d="M5 16v-3a2 2 0 0 1 2-2M10 16v-3M13 16v-3" /></>,
  pencil: <><path d="M1 16h9" /><path d="M9 14L15 2l2 1-6 12z" fill="#ead040" /></>,
  curve: <path d="M2 16c6 0 10-4 10-12" fill="none" />,
  downArrow: <path d="M7 2h4v8h3l-5 6-5-6h3z" fill="#f00000" stroke="none" />,
  upArrow: <path d="M7 16h4V8h3L9 2 4 8h3z" fill="#0000f0" stroke="none" />,
  ring: <circle cx="9" cy="9" r="7" />,
  box: <rect x="2" y="2" width="14" height="14" />,
};

const Tool = ({ name, ml }) => (
  <ToolBtn $ml={ml}>
    <Ico>{drawings[name]}</Ico>
  </ToolBtn>
);

const ToolGroup = ({ names }) => names.map((n) => <Tool key={n} name={n} />);

/* ---------- chart panes ---------- */
const Grid = ({ y1, y2 }) =>
  gridX.map((x) => (
    <line key={x} x1={x} x2={x} y1={y1} y2={y2} stroke="#6c6c6c" strokeDasharray="5 4" shapeRendering="crispEdges" />
  ));

const HLine = ({ y, c, dash, to = 1758 }) => (
  <line x1="3" x2={to} y1={y} y2={y} stroke={c} strokeDasharray={dash} shapeRendering="crispEdges" />
);

const DownArrow = ({ x, y }) => (
  <path d={`M${x - 2} ${y}h4v11h4.5l-6.5 8-6.5-8h4.5z`} fill="#f00000" />
);
const UpArrow = ({ x, y }) => (
  <path d={`M${x - 2} ${y + 19}h4v-11h4.5l-6.5-8-6.5 8h4.5z`} fill="#ffff00" />
);

const PricePane = () => (
  <svg width="1838" height="469" viewBox="2 88 1838 469">
    <Grid y1={108} y2={555} />
    <HLine y={348.5} c="#008a8a" dash="3 3" to={1835} />
    <HLine y={533} c="#008a8a" dash="3 3" to={1835} />
    <HLine y={364.5} c="#8c8c8c" dash="12 3 3 3" />
    <HLine y={380.5} c="#8c8c8c" dash="12 3 3 3" />
    <polyline points={toLine(price)} fill="none" stroke="#6a60ff" strokeWidth="1.1" />
    <polyline points={toLine(upperChannel)} fill="none" stroke="#008080" strokeWidth="1.1" />
    <polyline points={toLine(lowerChannel)} fill="none" stroke="#008080" strokeWidth="1.1" />
    {hilowSegs.map((seg, n) => (
      <g key={n} fill={seg.c}>
        {onBars(seg.p, 1).map(([x, y]) => (
          <rect key={x} x={x - 2} y={y - 2} width="4" height="4" shapeRendering="crispEdges" />
        ))}
      </g>
    ))}
    <g fill="#00ffff">
      {price.map(([x, y]) => (
        <rect key={x} x={x - 1.7} y={y - 1.7} width="3.5" height="3.5" shapeRendering="crispEdges" />
      ))}
    </g>
    <DownArrow x={273.5} y={121} />
    <DownArrow x={958.7} y={164} />
    <DownArrow x={1503.6} y={322} />
    <UpArrow x={678.3} y={283} />
    <UpArrow x={1228.3} y={526} />
  </svg>
);

const LeoPane = () => (
  <svg width="1838" height="217" viewBox="2 557 1838 217">
    <Grid y1={577} y2={771} />
    <HLine y={609.5} c="#e00000" />
    <HLine y={644.5} c="#707000" />
    <HLine y={679.5} c="#0000d0" dash="4 3" />
    <HLine y={686.5} c="#8c8c8c" dash="4 3" />
    <HLine y={714.5} c="#707000" />
    <HLine y={749.5} c="#e00000" />
    <line x1="1223" x2="1223" y1="577" y2="771" stroke="#c0c8d0" shapeRendering="crispEdges" />
    <polyline points={toLine(leoRed)} fill="none" stroke="#f00000" />
    <polyline points={toLine(leoYellow)} fill="none" stroke="#ffff00" />
    <line x1="1224" y1="759" x2="1718" y2="577" stroke="#c020c0" strokeWidth="1.2" />
    <polyline points={toLine(leo)} fill="none" stroke="#00ffff" />
  </svg>
);

const cciColor = (y) => (y < 817 ? "#f00000" : y > 944 ? "#00e8e8" : "#a8a8a8");

const CciPane = () => (
  <svg width="1838" height="215" viewBox="2 774 1838 215">
    <Grid y1={792} y2={987} />
    <HLine y={818.5} c="#8c8c8c" />
    <HLine y={943.5} c="#8c8c8c" />
    {cci.map(([x, y]) => (
      <line key={x} x1={x} x2={x} y1="880" y2={y} stroke="#505050" shapeRendering="crispEdges" />
    ))}
    {cci.slice(1).map(([x, y], n) => (
      <line key={x} x1={cci[n][0]} y1={cci[n][1]} x2={x} y2={y} stroke={cciColor((y + cci[n][1]) / 2)} />
    ))}
    <polyline points={toLine(stoch)} fill="none" stroke="#d06a10" strokeDasharray="3 3" />
    <g fill="#00e8e8">
      {[[53, 800], [268, 801], [673, 803], [923, 804], [1458, 798]].map(([x, y]) => (
        <ellipse key={x} cx={x} cy={y} rx="3.5" ry="4" />
      ))}
    </g>
    <g fill="#f00000">
      {[[558, 983], [1148, 982], [1293, 981], [1713, 981]].map(([x, y]) => (
        <ellipse key={x} cx={x} cy={y} rx="3.5" ry="4" />
      ))}
    </g>
  </svg>
);

const legends = {
  price: [
    ["GS:FTSEMIB - 60 min", "#4f4fe0", 0],
    ["07/02/2024", "#fff", 16],
    ["L=33515.000", "#00e000", 10],
    ["C=33515.000", "#00e000", 10],
    ["Close", "#fff", 10],
    ["33515.000", "#00ffff", 20],
    ["HILOW Alert", "#fff", 9],
    ["33714.717", "#f00000", 19],
    ["DONCHIAN CHANNEL", "#fff", 9],
    ["34040.000", "#008080", 15.5],
    ["33310.000", "#008080", 10],
    ["Posizioni", "#fff", 9],
    ["33965.000", "#808080", 19],
    ["33860.000", "#808080", 9],
  ],
  leo: [
    ["Leo Chart", "#fff", 0],
    ["-2.19", "#00ffff", 18.5],
    ["8.00", "#f00000", 10.5],
    ["-8.00", "#f00000", 9.5],
    ["4.00", "#707000", 10],
    ["-4.00", "#707000", 9],
    ["0.00", "#0000e0", 10],
    ["Macd Ciclico", "#fff", 9.5],
    ["0.00", "#666", 40],
  ],
  cci: [
    ["CCI Smothing ekam", "#fff", 0],
    ["3.40", "#808080", 18],
    ["120.00", "#808080", 11],
    ["-120.00", "#808080", 9.5],
    ["3.40", "#404040", 10],
    ["Stoc colore", "#fff", 11],
    ["-0.47", "#c06414", 36],
  ],
};

const PaneLegend = ({ items, lh }) => (
  <Legend $lh={lh}>
    {items.map(([t, c, g], n) => (
      <LegendItem key={n} $c={c} $ml={g}>
        {t}
      </LegendItem>
    ))}
  </Legend>
);

const MinGlyph = () => <svg width="10" height="10" viewBox="0 0 10 10"><path d="M2 8h6" stroke="#6c8098" strokeWidth="2" /></svg>;
const RestoreGlyph = () => <svg width="10" height="10" viewBox="0 0 10 10" fill="none" stroke="#6c8098" strokeWidth="1.3"><path d="M3 3V1h6v4H7" /><rect x="1" y="3" width="6" height="5" /></svg>;
const CloseGlyph = () => <svg width="10" height="10" viewBox="0 0 10 10"><path d="M2 2l6 6M8 2l-6 6" stroke="#6c8098" strokeWidth="2" /></svg>;

const dates = "5/10 5/13 5/15 5/16 5/20 5/21 5/23 5/24 5/28 5/29 5/31 6/04 6/05 6/07 6/10 6/12 6/13 6/17 6/18 6/20 6/24 6/25 6/27 6/28 7/02".split(" ");
const tabs = ["STOX C164", "STOX C55", "STOX  C30", "STOX  8 Giorni", "FTSEMIB C164", "FTSEMIB C55", "FTSEMIB C30", "FTSEMIB  8 Giorni", "PERCENTUALE", "C164_3_Int", "ZONE STOX", "ZONE FTSEMIB", "STOX C4", "FTSEMIB C4"];
const menus = [["File", 14.2], ["Edit", 15], ["View", 13.6], ["Insert", 11], ["Format", 12.6], ["Drawing", 13.4], ["Window", 14.8], ["Help", 0]];

export default function App() {
  return (
    <Page>
      <GlobalStyle />
      <TitleBar>
        <svg width="20" height="26" viewBox="0 0 20 26" style={{ flex: "none" }}>
          <path d="M2 24C0 14 5 5 13 2c-2 4 0 5 3 9 3 5 2 10 0 13-1-5-3-9-6-11-3 2-6 6-8 11z" fill="#1e5fd0" />
          <path d="M9 11c1-3 2-5 4-7-1 3 0 5 1 7-2-1-3-1-5 0z" fill="#9cd0ff" />
        </svg>
        <TitleText>{"TradeStation 8.1 - STOXX_FTSEMIB - FTSEMIB  8 Giorni - [Chart Analysis - GS:FTSEMIB  60 min  [MCEDB] SPMIB FUTURES]"}</TitleText>
        <WinButtons>
          <WinButton $w={38}><svg width="18" height="14" viewBox="0 0 18 14"><path d="M1 11h16" stroke="#fff" strokeWidth="4" /></svg></WinButton>
          <WinButton $w={36}><svg width="18" height="18" viewBox="0 0 18 18" fill="none" stroke="#fff" strokeWidth="2"><path d="M5 3V1h12v12h-3" /><rect x="2" y="4" width="11" height="12" /><rect x="6" y="8" width="3" height="4" strokeWidth="1.5" /></svg></WinButton>
          <WinButton $w={63} $close><svg width="22" height="18" viewBox="0 0 22 18"><path d="M4 1l14 16M18 1L4 17" stroke="#fff" strokeWidth="4.5" /></svg></WinButton>
        </WinButtons>
      </TitleBar>

      <MenuBar>
        <MenuLogo viewBox="0 0 20 17">
          <rect width="20" height="17" fill="#101010" />
          <rect width="20" height="2" fill="#2030a0" />
          <path d="M2 12l4-5 2 3 3-6 2 4 5-3" stroke="#20e020" fill="none" />
          <path d="M2 15h16" stroke="#c02020" strokeDasharray="1 2" />
        </MenuLogo>
        {menus.map(([m, g]) => (
          <MenuItem key={m} $gap={g}>{m}</MenuItem>
        ))}
        <MdiButtons $h={26}>
          <MdiButton><MinGlyph /></MdiButton>
          <MdiButton><RestoreGlyph /></MdiButton>
          <MdiButton><CloseGlyph /></MdiButton>
        </MdiButtons>
      </MenuBar>

      <Toolbar>
        <Grip />
        <ToolGroup names={["doc", "open", "saves", "note", "olive"]} />
        <ToolSep />
        <ToolGroup names={["preview", "printer"]} />
        <ToolSep />
        <ToolGroup names={["winBlue", "winColor", "lock", "dish", "cubes"]} />
        <ToolSep />
        <SymbolBox>
          Type a symbol/co
          <DropArrow />
        </SymbolBox>
        <PlayArrow />
        <Tool name="lookup" ml={7} />
        <Grip $ml={75} />
        <ToolGroup names={["gray1", "gray2", "gray3"]} />
        <ToolSep />
        <ToolGroup names={["wave", "updown", "stack"]} />
        <ToolSep />
        <ToolGroup names={["chartA", "chartB"]} />
        <ToolSep />
        <ToolGroup names={["calendar", "clockBars", "black", "blueBars", "candles"]} />
        <ToolSep />
        <ToolGroup names={["inward", "outward"]} />
        <ToolSep />
        <ToolGroup names={["zoomIn", "zoomOut"]} />
        <ToolSep />
        <ToolGroup names={["cursor", "chartT"]} />
        <ToolSep />
        <Tool name="tools" />
        <ToolSep />
        <Tool name="addTable" />
        <ToolSep />
        <Tool name="grayNote" />
        <Grip $ml={16} />
        <ToolGroup names={["trend", "vlines", "hlines", "calc", "fan", "fibo", "stairs", "speed", "angle", "arrows", "channel", "arcs", "pencil"]} />
        <ToolSep />
        <ToolGroup names={["curve", "downArrow", "upArrow", "ring", "box"]} />
        <ToolBtn><AbcLabel>abc</AbcLabel></ToolBtn>
      </Toolbar>

      <ChartWindow>
        <MdiOverlay $h={23}>
          <MdiButton><MinGlyph /></MdiButton>
          <MdiButton><RestoreGlyph /></MdiButton>
          <MdiButton><CloseGlyph /></MdiButton>
        </MdiOverlay>
        <ChartBody>
          <Plot>
            <Pane $h={469}>
              <PricePane />
              <PaneLegend items={legends.price} lh={25} />
              <LevelLabel $y={249}>34070.000</LevelLabel>
              <LevelLabel $y={433}>32870.000</LevelLabel>
            </Pane>
            <Pane $h={217}>
              <LeoPane />
              <PaneLegend items={legends.leo} lh={23} />
            </Pane>
            <Pane $h={215}>
              <CciPane />
              <PaneLegend items={legends.cci} lh={21} />
            </Pane>
          </Plot>
          <PriceAxis>
            <AxisTick $y={129}>35500</AxisTick>
            <AxisTick $y={205}>35000</AxisTick>
            <AxisTick $y={282}>34500</AxisTick>
            <AxisTick $y={513}>33000</AxisTick>
            <Badge $y={371} $bg="#808080">33860</Badge>
            <Badge $y={354} $bg="#808080">33965</Badge>
            <Badge $y={344} $bg="#008080">34040</Badge>
            <Badge $y={394} $bg="#ff0000">33715</Badge>
            <Badge $y={424} $bg="#6666ff">33515</Badge>
            <Badge $y={456} $bg="#008080">33310</Badge>
            <PaneRule $y={557} />

            <AxisMark $y={591} />
            <AxisMark $y={626} />
            <AxisMark $y={661} />
            <AxisMark $y={731} />
            <Badge $y={600} $bg="#ff0000">8.00</Badge>
            <Badge $y={635} $bg="#666600">4.00</Badge>
            <Badge $y={670} $bg="#0000ff">0.00</Badge>
            <Badge $y={705} $bg="#666600" $wide>-4.00</Badge>
            <Badge $y={689} $bg="#00ffff" $wide>-2.19</Badge>
            <Badge $y={740} $bg="#ff0000" $wide>-8.00</Badge>
            <PaneRule $y={774} />

            <AxisTick $y={855}>50.00</AxisTick>
            <AxisTick $y={908}>-50.00</AxisTick>
            <AxisTick $y={960}>-150.00</AxisTick>
            <AxisMark $y={933} />
            <Badge $y={809} $bg="#808080">120.00</Badge>
            <Badge $y={870} $bg="#a4a4a4">3.40</Badge>
            <Badge $y={934} $bg="#808080" $wide>-120.00</Badge>
          </PriceAxis>
        </ChartBody>
        <DateStrip>
          {dates.map((d) => (
            <DateLabel key={d}>{d}</DateLabel>
          ))}
        </DateStrip>
      </ChartWindow>

      <ScrollBar>
        <ScrollArrow $left />
        <ScrollThumb />
        <ScrollArrow />
      </ScrollBar>

      <TabRow>
        {["M2 2v6M7 2L3 5l4 3", "M6 2L2 5l4 3", "M2 2l4 3-4 3", "M2 2l4 3-4 3M7 2v6"].map((d) => (
          <NavButton key={d}>
            <svg width="9" height="10" viewBox="0 0 9 10" fill="#777" stroke="#777"><path d={d} /></svg>
          </NavButton>
        ))}
        <TabStrip>
          {tabs.map((t, n) => (
            <Tab key={t} $active={t === "FTSEMIB  8 Giorni"} $full={t === "FTSEMIB  8 Giorni" || n === tabs.length - 1}>
              {t}
            </Tab>
          ))}
        </TabStrip>
        <TabFiller />
      </TabRow>

      <StatusBar>
        <StatusCell $w={1092} $pl={2} $plain>For Help, press F1</StatusCell>
        <StatusCell $w={51} $plain>Acct:</StatusCell>
        <StatusCell $w={92}>Open Psns:</StatusCell>
        <StatusCell $w={62.5}>DT BP:</StatusCell>
        <StatusCell $w={87}>Purch Pwr:</StatusCell>
        <StatusCell $w={93}>Closed P/L:</StatusCell>
        <StatusCell $w={59.5}>RT TE:</StatusCell>
        <StatusCell $w={84}>Open P/L:</StatusCell>
        <StatusCell $w={88} $c="#108010">ORDER BAR</StatusCell>
        <StatusCell $w={68} $c="#10a060">MACROS</StatusCell>
        <StatusCell $w={19} $pl={0}><Ball /></StatusCell>
        <StatusCell $w={124}>02/07/2024 14:01</StatusCell>
      </StatusBar>
      <BottomEdge />
    </Page>
  );
}
